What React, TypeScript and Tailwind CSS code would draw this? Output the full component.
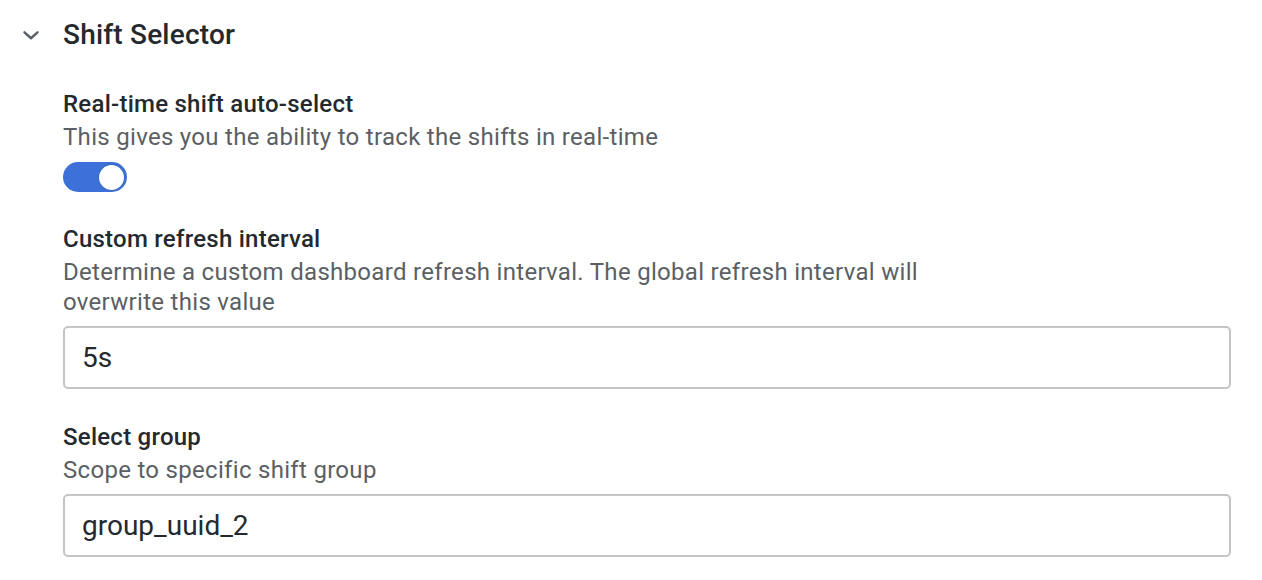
import React, { useState } from 'react';

const Chevron: React.FC = () => (
  <svg width="26" height="26" viewBox="0 0 24 24" fill="none" stroke="#5a5f66" strokeWidth="2.2" strokeLinecap="round" strokeLinejoin="round">
    <polyline points="6 9.5 12 15 18 9.5" />
  </svg>
);

const Field: React.FC<{ label: string; description: React.ReactNode; children: React.ReactNode; className?: string }> = ({ label, description, children, className }) => (
  <div className={className}>
    <div className="text-[24px] leading-[36px] font-medium tracking-[0.25px] text-[#24292e]">{label}</div>
    <div className="text-[24px] leading-[30px] tracking-[0.3px] text-[#5b5f64] max-w-[880px]">{description}</div>
    {children}
  </div>
);

export default function App() {
  const [realtime, setRealtime] = useState(true);
  const [interval, setInterval] = useState('5s');
  const [group, setGroup] = useState('group_uuid_2');

  return (
    <div className="w-[1262px] h-[580px] bg-white overflow-hidden" style={{ fontFamily: 'Roboto, "Noto Sans", sans-serif' }}>
      <div className="flex items-center h-[69px] pl-[18px]">
        <Chevron />
        <h2 className="ml-[19px] text-[28px] font-medium text-[#24292e] tracking-[0.2px]">Shift Selector</h2>
      </div>

      <div className="pl-[63px] pr-[31px] pt-[17px]">
        <Field label="Real-time shift auto-select" description="This gives you the ability to track the shifts in real-time">
          <button
            onClick={() => setRealtime(!realtime)}
            className={`mt-[10px] w-[64px] h-[30px] rounded-full flex items-center px-[3px] ${realtime ? 'bg-[#3d71d9] justify-end' : 'bg-[#c7c9cc] justify-start'}`}
          >
            <span className="w-[25px] h-[25px] rounded-full bg-white shadow-[0_0_2px_rgba(0,0,0,0.25)]" />
          </button>
        </Field>

        <Field
          className="mt-[29px]"
          label="Custom refresh interval"
          description="Determine a custom dashboard refresh interval. The global refresh interval will overwrite this value"
        >
          <input
            value={interval}
            onChange={(e) => setInterval(e.target.value)}
            className="mt-[9px] w-full h-[63px] border-2 border-[#c4c5c7] rounded-[5px] px-[17px] text-[28px] text-[#24292e] outline-none"
          />
        </Field>

        <Field className="mt-[30px]" label="Select group" description="Scope to specific shift group">
          <input
            value={group}
            onChange={(e) => setGroup(e.target.value)}
            className="mt-[9px] w-full h-[63px] border-2 border-[#c4c5c7] rounded-[5px] px-[17px] text-[28px] text-[#24292e] outline-none"
          />
        </Field>
      </div>
    </div>
  );
}
